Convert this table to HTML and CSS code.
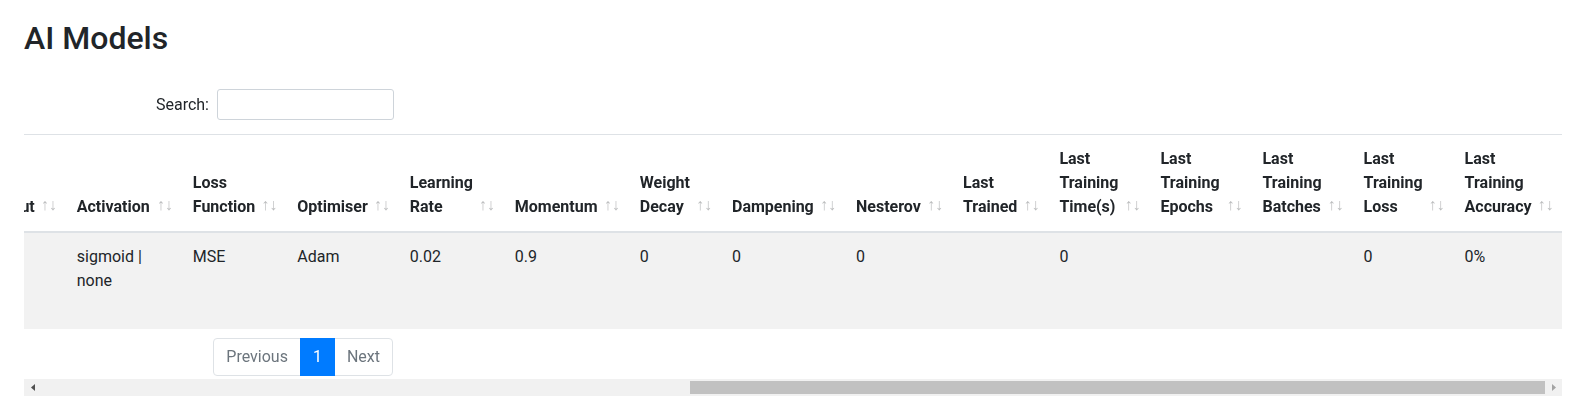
FILE: index.html
```html
<!DOCTYPE html>
<html lang="en">
<head>
    <meta charset="UTF-8">
    <title>AI Models</title>
    <link rel="stylesheet" href="styles.css">
</head>
<body>
    <div class="page">
        <h2 class="page-title">AI Models</h2>

        <div class="dt-scroll" id="modelsScroll">
            <div class="dt-inner">
                <div class="dt-top">
                    <label class="dt-filter">Search:<input type="search" class="dt-search"></label>
                </div>

                <table class="dt-table">
                    <thead>
                        <tr>
                            <th class="sorting col-id">ID</th>
                            <th class="sorting col-name">Name</th>
                            <th class="sorting col-desc">Description</th>
                            <th class="sorting col-created">Created</th>
                            <th class="sorting col-updated">Updated</th>
                            <th class="sorting col-input">Input</th>
                            <th class="sorting col-hidden">Hidden</th>
                            <th class="sorting col-output">Output</th>
                            <th class="sorting col-activation">Activation</th>
                            <th class="sorting col-loss-fn">Loss Function</th>
                            <th class="sorting col-optimiser">Optimiser</th>
                            <th class="sorting col-lr">Learning Rate</th>
                            <th class="sorting col-momentum">Momentum</th>
                            <th class="sorting col-decay">Weight Decay</th>
                            <th class="sorting col-dampening">Dampening</th>
                            <th class="sorting col-nesterov">Nesterov</th>
                            <th class="sorting col-trained">Last Trained</th>
                            <th class="sorting col-time">Last Training Time(s)</th>
                            <th class="sorting col-epochs">Last Training Epochs</th>
                            <th class="sorting col-batches">Last Training Batches</th>
                            <th class="sorting col-loss">Last Training Loss</th>
                            <th class="sorting col-accuracy">Last Training Accuracy</th>
                        </tr>
                    </thead>
                    <tbody>
                        <tr class="odd">
                            <td>1</td>
                            <td>XOR Classifier</td>
                            <td>Learns the XOR function from two binary inputs and a single output</td>
                            <td>2024-03-12 10:41</td>
                            <td>2024-03-12 10:41</td>
                            <td>2</td>
                            <td>4</td>
                            <td>1</td>
                            <td>sigmoid | none</td>
                            <td>MSE</td>
                            <td>Adam</td>
                            <td>0.02</td>
                            <td>0.9</td>
                            <td>0</td>
                            <td>0</td>
                            <td>0</td>
                            <td></td>
                            <td>0</td>
                            <td></td>
                            <td></td>
                            <td>0</td>
                            <td>0%</td>
                        </tr>
                    </tbody>
                </table>

                <div class="dt-bottom">
                    <ul class="pagination">
                        <li class="page-item disabled"><a class="page-link" href="#">Previous</a></li>
                        <li class="page-item active"><a class="page-link" href="#">1</a></li>
                        <li class="page-item disabled"><a class="page-link" href="#">Next</a></li>
                    </ul>
                </div>
            </div>
        </div>

        <!-- horizontal scrollbar for the table -->
        <div class="scrollbar">
            <div class="sb-btn">
                <svg width="4" height="7" viewBox="0 0 4 7"><polygon points="4,0 4,7 0,3.5" fill="#505050"/></svg>
            </div>
            <div class="sb-track" id="sbTrack">
                <div class="sb-thumb" id="sbThumb"></div>
            </div>
            <div class="sb-btn">
                <svg width="4" height="7" viewBox="0 0 4 7"><polygon points="0,0 0,7 4,3.5" fill="#a3a3a3"/></svg>
            </div>
        </div>
    </div>

    <script>
        // Show the last columns: scroll the table all the way right
        function scrollToEnd() {
            const scroller = document.getElementById('modelsScroll');
            scroller.scrollLeft = scroller.scrollWidth;

            const track = document.getElementById('sbTrack');
            const thumb = document.getElementById('sbThumb');
            const trackWidth = track.clientWidth;
            const ratio = scroller.clientWidth / scroller.scrollWidth;

            thumb.style.width = (trackWidth * ratio) + 'px';
            thumb.style.marginLeft = (trackWidth * scroller.scrollLeft / scroller.scrollWidth) + 'px';
        }

        scrollToEnd();
        window.addEventListener('load', scrollToEnd);
    </script>
</body>
</html>
```

FILE: styles.css
```css
*, *::before, *::after {
    box-sizing: border-box;
}
body {
    margin: 0;
    font-family: Roboto, "Helvetica Neue", Arial, sans-serif;
    font-size: 16px;
    line-height: 1.5;
    color: #212529;
    background-color: #fff;
}
.page {
    padding: 19px 18px 3px 24px;
}
.page-title {
    margin: 0 0 32px;
    font-size: 32px;
    font-weight: 500;
    line-height: 38px;
}

/* scrolling wrapper round the datatable */
.dt-scroll {
    overflow: hidden;
}
.dt-inner {
    width: max-content;
}

/* search box and pager stay put while the table scrolls */
.dt-top,
.dt-bottom {
    position: sticky;
    left: 0;
    display: flex;
    justify-content: flex-end;
}
.dt-top {
    width: 370px;
    height: 31px;
    align-items: center;
}
.dt-bottom {
    width: 369px;
}
.dt-filter {
    display: flex;
    align-items: center;
    margin: 0;
    white-space: nowrap;
}
.dt-search {
    width: 177px;
    height: 31px;
    margin-left: 8px;
    padding: 4px 8px;
    font-family: inherit;
    font-size: 14px;
    color: #495057;
    border: 1px solid #ced4da;
    border-radius: 3px;
    outline: none;
}

/* table */
.dt-table {
    border-collapse: collapse;
    margin-top: 14px;
}
.dt-table th,
.dt-table td {
    padding: 12px;
    text-align: left;
    border-top: 1px solid #dee2e6;
}
.dt-table th {
    vertical-align: bottom;
    font-weight: bold;
    border-bottom: 2px solid #dee2e6;
}
.dt-table td {
    vertical-align: top;
}
.dt-table tbody tr.odd {
    background-color: #f2f2f2;
}
.dt-table th.sorting {
    position: relative;
    padding-right: 30px;
}
.dt-table th.sorting::before,
.dt-table th.sorting::after {
    position: absolute;
    bottom: 0.9em;
    display: block;
    opacity: 0.3;
    font-weight: normal;
}
.dt-table th.sorting::before {
    right: 1em;
    content: "\2191";
}
.dt-table th.sorting::after {
    right: 0.5em;
    content: "\2193";
}

/* column widths */
.col-id { width: 80px; }
.col-name { width: 170px; }
.col-desc { width: 220px; }
.col-created { width: 180px; }
.col-updated { width: 180px; }
.col-input { width: 140px; }
.col-hidden { width: 149px; }
.col-output { white-space: nowrap; }
.col-activation { width: 116px; }
.col-loss-fn { width: 103px; }
.col-optimiser { width: 111px; }
.col-lr { width: 105px; }
.col-momentum { width: 125px; }
.col-decay { width: 92px; }
.col-dampening { width: 124px; }
.col-nesterov { width: 107px; }
.col-trained { width: 96px; }
.col-time { width: 101px; }
.col-epochs { width: 102px; }
.col-batches { width: 101px; }
.col-loss { width: 101px; }
.col-accuracy { width: 106px; }

/* pager */
.pagination {
    display: flex;
    margin: 9px 0 3px;
    padding: 0;
    list-style: none;
}
.page-link {
    display: block;
    margin-left: -1px;
    padding: 8px 12px;
    line-height: 20px;
    color: #6c757d;
    text-decoration: none;
    background-color: #fff;
    border: 1px solid #dee2e6;
}
.page-item:first-child .page-link {
    margin-left: 0;
    border-radius: 4px 0 0 4px;
}
.page-item:last-child .page-link {
    border-radius: 0 4px 4px 0;
}
.page-item.active .page-link {
    position: relative;
    color: #fff;
    background-color: #007bff;
    border-color: #007bff;
}

/* scrollbar */
.scrollbar {
    display: flex;
    height: 17px;
    background-color: #f1f1f1;
}
.sb-btn {
    display: flex;
    align-items: center;
    justify-content: center;
    flex: 0 0 17px;
}
.sb-track {
    display: flex;
    flex: 1;
    padding: 2px 0;
}
.sb-thumb {
    height: 13px;
    background-color: #c1c1c1;
}
```
